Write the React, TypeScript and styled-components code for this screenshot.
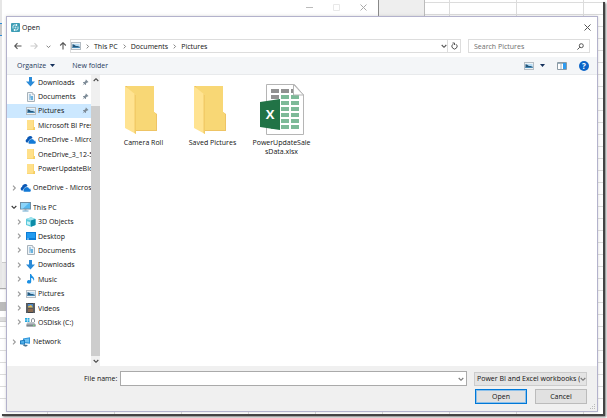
import React from 'react';
import styled, { createGlobalStyle, css } from 'styled-components';

const Global = createGlobalStyle`
  * { box-sizing: border-box; }
  body { margin: 0; background: #fff; font-family: "Open Sans", "Noto Sans", sans-serif; font-size: 7px; line-height: 9px; color: #111; }
  button, input, select { font: inherit; color: inherit; margin: 0; }
  svg { display: block; flex: none; }
`;

const Page = styled.div`
  min-height: 100vh;
  display: flex;
  padding: 0 4px 4px 0;
`;

const Desktop = styled.div`
  position: relative;
  isolation: isolate;
  flex: 1;
  min-width: 0;
  display: flex;
  padding: 16px 5px 2px 6px;
  background:
    repeating-linear-gradient(180deg, transparent 0 11px, #dcdcdc 11px 12px) 0 -9px,
    repeating-linear-gradient(90deg, transparent 0 66px, #dcdcdc 66px 67px) -19px 0,
    #fff;
  box-shadow: 2px 2px 0 0 #444, 3px 3px 2px 0 #777;
`;

const BackWindow = styled.div`
  position: absolute;
  z-index: -1;
  left: 0;
  top: 0;
  width: 425px;
  height: 322px;
  background: linear-gradient(180deg, #eee 0 290px, #fff 290px 302px, #bbb 302px 311px, #fff 311px 317px, #ddd 317px);
  border-right: 1px solid #bbb;
  border-bottom: 1px solid #ccc;
`;

const FrontWindow = styled.div`
  position: absolute;
  left: 0;
  top: 0;
  width: 379px;
  height: 289px;
  display: flex;
  justify-content: flex-end;
  gap: 20px;
  padding: 4px 11px 0 0;
  background:
    linear-gradient(180deg, #e6e6e6 0 23px, #2b8bd8 23px 24px, #c8c8c8 24px 35px, #2b8bd8 35px 36px, #e6e6e6 36px) 0 0 / 2px 100% no-repeat,
    linear-gradient(180deg, #fff 0 262px, #ccc 262px 263px, #ececec 263px);
  border-right: 1px solid #888;
  border-bottom: 1px solid #aaa;
  color: #bbb;
`;

const Dialog = styled.section`
  flex: 1;
  min-width: 0;
  display: flex;
  flex-direction: column;
  background: #fff;
  border: 1px solid #b3b2cc;
  box-shadow: 0 0 3px #9996;
`;

const TitleBar = styled.header`
  height: 20px;
  display: flex;
  align-items: center;
  gap: 2px;
  padding: 0 6px 0 4px;
`;

const Title = styled.h1`
  flex: 1;
  margin: 0;
  font-size: 7px;
  font-weight: 400;
`;

const IconButton = styled.button`
  display: grid;
  place-items: center;
  padding: 0;
  border: 0;
  background: transparent;
`;

const AddressRow = styled.div`
  display: flex;
  align-items: center;
  padding: 2px 7px 4px;
`;

const History = styled.div`
  display: flex;
  align-items: center;
  gap: 8px;
  margin-right: 3px;
`;

const AddressBox = styled.div`
  flex: 1;
  display: flex;
  height: 14px;
  border: 1px solid #ddd;
`;

const Crumbs = styled.nav`
  flex: 1;
  display: flex;
  align-items: center;
  gap: 4px;
`;

const Crumb = styled.a`
  color: inherit;
  text-decoration: none;
`;

const Refresh = styled(IconButton)`
  width: 13px;
  border-left: 1px solid #ddd;
`;

const SearchBox = styled.label`
  display: flex;
  align-items: center;
  width: 122px;
  height: 14px;
  margin-left: 7px;
  padding: 0 5px;
  border: 1px solid #ddd;
`;

const SearchInput = styled.input`
  flex: 1;
  min-width: 0;
  padding: 0;
  border: 0;
  outline: 0;
  background: transparent;
  &::placeholder { color: #6d6d6d; opacity: 1; }
`;

const Toolbar = styled.div`
  display: flex;
  align-items: center;
  height: 18px;
  padding: 0 8px 0 10px;
  background: #f4f6f8;
  border-bottom: 1px solid #e8eaec;
`;

const ToolButton = styled.button`
  display: flex;
  align-items: center;
  gap: 4px;
  margin-right: 17px;
  padding: 0;
  border: 0;
  background: transparent;
  color: #25395c;
`;

const ToolEnd = styled.div`
  display: flex;
  align-items: center;
  gap: 12px;
  margin-left: auto;
`;

const ViewGroup = styled.div`
  display: flex;
  align-items: center;
  gap: 6px;
`;

const Content = styled.div`
  flex: 1;
  display: flex;
`;

const Tree = styled.ul`
  width: 84px;
  display: flex;
  flex-direction: column;
  margin: 0;
  padding: 0 0 17px;
  list-style: none;
`;

const TreeRow = styled.li<{ $depth: number; $selected?: boolean; $gap?: boolean }>`
  flex: 1 0 14px;
  display: flex;
  align-items: center;
  padding-left: ${p => (p.$depth ? 8 : 3)}px;
  margin-top: ${p => (p.$gap ? 5 : 0)}px;
  ${p => p.$selected && css`background: #cce8ff;`}
`;

const Twisty = styled.span`
  width: 7px;
  display: grid;
  place-items: center;
  margin-right: 3px;
`;

const RowIcon = styled.span`
  width: 11px;
  display: grid;
  place-items: center;
  margin-right: 2px;
`;

const RowLabel = styled.span`
  flex: 1;
  min-width: 0;
  overflow: hidden;
  white-space: nowrap;
`;

const PinSlot = styled.span`
  margin-right: 2px;
`;

const ScrollBar = styled.div`
  width: 9px;
  display: flex;
  flex-direction: column;
  background: #f0f0f0;
`;

const ScrollButton = styled(IconButton)`
  height: 10px;
`;

const Thumb = styled.div`
  flex: 1;
  margin-top: 21px;
  background: #cdcdcd;
`;

const Files = styled.div`
  flex: 1;
  display: flex;
  align-items: flex-start;
  padding: 9px 0 0 9px;
`;

const FileTile = styled.button`
  width: 69px;
  display: flex;
  flex-direction: column;
  align-items: center;
  padding: 0 4px;
  border: 0;
  background: transparent;
  text-align: center;
`;

const FileName = styled.span`
  margin-top: 2px;
  max-width: 60px;
  overflow-wrap: anywhere;
`;

const Footer = styled.footer`
  position: relative;
  display: flex;
  flex-direction: column;
  gap: 3px;
  padding: 5px 10px 7px 77px;
  background: #f0f0f0;
`;

const FooterRow = styled.div`
  display: flex;
  justify-content: flex-end;
  align-items: center;
`;

const NameLabel = styled.label`
  margin-right: 3px;
`;

const NameCombo = styled.div`
  flex: 1;
  display: flex;
  height: 15px;
  margin-right: 7px;
  padding-right: 2px;
  border: 1px solid #aaa;
  background: #fff;
`;

const NameInput = styled.input`
  flex: 1;
  min-width: 0;
  padding: 0 2px;
  border: 0;
  outline: 0;
`;

const TypeWrap = styled.div`
  width: 113px;
  height: 14px;
  display: flex;
  align-items: center;
  padding-left: 2px;
  border: 1px solid #ccc;
  background: #e4e4e4;
`;

const TypeSelect = styled.select`
  flex: 1;
  min-width: 0;
  padding: 0;
  border: 0;
  appearance: none;
  background: transparent;
  text-overflow: clip;
`;

const ActionButton = styled.button<{ $primary?: boolean }>`
  width: 52px;
  height: 15px;
  margin-left: 8px;
  padding: 0;
  background: #e1e1e1;
  border: ${p => (p.$primary ? '1px solid #0078d7' : '1px solid #bbb')};
  box-shadow: ${p => (p.$primary ? 'inset 0 0 0 1px #8cc0ea' : 'none')};
`;

const Grip = styled.svg`
  position: absolute;
  right: 1px;
  bottom: 1px;
`;

type Dir = 'left' | 'right' | 'up' | 'down';
const turns: Record<Dir, number> = { right: 0, down: 90, left: 180, up: 270 };

const Chevron = ({ dir, color = '#777', size = 6 }: { dir: Dir; color?: string; size?: number }) => (
  <svg width={size} height={size} viewBox="0 0 6 6" fill="none" stroke={color} strokeWidth="1.1">
    <path d="M2 .7 4.3 3 2 5.3" transform={`rotate(${turns[dir]} 3 3)`} />
  </svg>
);

const Arrow = ({ dir, color = '#555' }: { dir: Dir; color?: string }) => (
  <svg width="8" height="8" viewBox="0 0 8 8" fill="none" stroke={color} strokeWidth="1.1">
    <path d="M.5 4H7.3M4.5 1.2 7.3 4 4.5 6.8" transform={`rotate(${turns[dir]} 4 4)`} />
  </svg>
);

const Cross = ({ color = '#555' }: { color?: string }) => (
  <svg width="7" height="7" viewBox="0 0 7 7" stroke={color} strokeWidth="1"><path d="m.5.5 6 6m0-6-6 6" /></svg>
);

const Caret = () => <svg width="5" height="3" viewBox="0 0 5 3"><path d="M0 0h5L2.500 3z" fill="#14305c" /></svg>;

const AppIcon = () => (
  <svg width="9" height="9" viewBox="0 0 9 9">
    <rect width="9" height="9" rx="1" fill="#3d9db5" />
    <path d="M2 5.500V3a1.500 1.500 0 0 1 2-1h1.500M7 3.500V6a1.500 1.500 0 0 1-2 1H3.500" fill="none" stroke="#d8f0f5" />
    <path d="m5 .8 1.700 1.200L5 3.300M4 5.700 2.300 7 4 8.200" fill="#fff" />
    <circle cx="4.500" cy="4.500" r="1" fill="#c1e4ec" />
  </svg>
);

const PictureIcon = () => (
  <svg width="10" height="8" viewBox="0 0 10 8">
    <rect x=".5" y=".5" width="9" height="7" fill="#eef2f5" stroke="#b4bcc3" />
    <path d="M1.500 2h7v4h-7z" fill="#b7dcf4" />
    <path d="M1.500 2.300c2 0 2.500 1.700 4 1.700s2 .5 3 .6V6h-7z" fill="#26567a" />
    <path d="M1.500 5h7v1h-7z" fill="#4388b5" />
  </svg>
);

const DownloadIcon = () => (
  <svg width="9" height="10" viewBox="0 0 9 10"><path d="M3 0h3v4.500h3L4.500 9.500 0 4.500h3z" fill="#2b8bd8" /></svg>
);

const DocumentIcon = () => (
  <svg width="8" height="10" viewBox="0 0 8 10">
    <path d="M.5.5h5l2 2v7h-7z" fill="#eef3f7" stroke="#a7b2ba" />
    <path d="M5.500.5v2h2" fill="#fff" stroke="#a7b2ba" strokeWidth=".7" />
    <path d="M2 3h2M2 5h4M2 7h1" stroke="#6aa3cc" />
    <path d="M3.500 4h2.500v4H3.500z" fill="#69b2de" />
  </svg>
);

const FolderIcon = () => (
  <svg width="8" height="10" viewBox="0 0 8 10">
    <path d="M0 0h7v7h1v3H0z" fill="#f5ce62" /><path d="M0 0h6.500v7L6 9.500H0z" fill="#ffe08a" />
  </svg>
);

const CloudIcon = () => (
  <svg width="11" height="8" viewBox="0 0 11 8">
    <path d="M1.500 6.500A2 2 0 0 1 2 3a3 3 0 0 1 5.500-1.500L4 6.500z" fill="#0a58b5" />
    <path d="M4.500 8A2 2 0 0 1 4.500 4.300a2.500 2.500 0 0 1 4.700.3A1.700 1.700 0 0 1 9.500 8z" fill="#1279d6" stroke="#fff" strokeWidth=".5" />
  </svg>
);

const ComputerIcon = () => (
  <svg width="11" height="10" viewBox="0 0 11 10">
    <rect x=".5" y=".5" width="10" height="6.500" fill="#55b8f0" stroke="#6f8ea3" />
    <path d="M1 1h8L3 6.500H1z" fill="#8bd4fa" /><path d="M4.500 7h2v1.500h-2z" fill="#9aa8b2" /><path d="M2.500 9h6" stroke="#65a6cf" />
  </svg>
);

const CubeIcon = () => (
  <svg width="10" height="10" viewBox="0 0 10 10">
    <path d="M0 2 5 .3 9.500 2v6L5 9.700 0 8z" fill="#5cc9dc" />
    <path d="M0 2 5 .3 9.500 2 5 3.500z" fill="#9de3ee" /><path d="M5 3.500 9.500 2v6L5 9.700z" fill="#0d8ca8" /><path d="M1 4.200 4 5v3L1 7.200z" fill="#c9f3f7" />
  </svg>
);

const DesktopIcon = () => (
  <svg width="10" height="8" viewBox="0 0 10 8">
    <rect width="10" height="8" fill="#0c7cd5" /><path d="M1 1h8v5H1z" fill="#229bf0" /><path d="M1 7h2" stroke="#b5ddfa" />
  </svg>
);

const MusicIcon = () => (
  <svg width="8" height="10" viewBox="0 0 8 10">
    <path d="M3 0h1.200c.2 2.300 3.300 2.500 3 6l-.8.700C6.700 4.700 5 4 4.200 4v4A2.100 1.700 0 1 1 3 6.300z" fill="#1a8fe3" />
  </svg>
);

const VideoIcon = () => (
  <svg width="9" height="10" viewBox="0 0 9 10">
    <rect width="9" height="10" fill="#3f4348" /><path d="M2 1h5v3.500H2z" fill="#4b86c6" /><path d="M2 5.500h5V9H2z" fill="#8a6a4f" />
    <path d="M2 3.500 5 2l2 2.500H2z" fill="#e6b94e" /><path d="M1 .5v9M8 .5v9" stroke="#c8ccd0" strokeWidth=".8" strokeDasharray="1 1" />
  </svg>
);

const DiskIcon = () => (
  <svg width="11" height="9" viewBox="0 0 11 9">
    <path d="M0 0h2v1.700H0zM2.500 0h2v1.700h-2zM0 2.200h2v1.700H0zM2.500 2.200h2v1.700h-2z" fill="#25a9e0" />
    <path d="m2 4.500 7-.5 1.500 2.500v2h-9v-2z" fill="#b3babf" /><path d="M1.500 6.500h9v2h-9z" fill="#7d868d" /><path d="M8 7.500h1.500" stroke="#73de79" />
    <path d="M6.500 4V2a1.500 1.500 0 0 1 3 0v2" fill="none" stroke="#8d959b" />
  </svg>
);

const NetworkIcon = () => (
  <svg width="11" height="10" viewBox="0 0 11 10">
    <path d="m3 1.500 7-1.200v6.500L3 6z" fill="#2d93d8" /><path d="m4 2.300 5-.9v4.100L4 5z" fill="#6fc2f3" />
    <path d="m0 3.500 5-.7v5L0 7.300z" fill="#1674b8" /><path d="m.8 4.200 3.400-.4v3L.8 6.500z" fill="#4faee8" /><path d="m4 7.500 4 .6-2 1.600-3-.9z" fill="#4d7590" />
  </svg>
);

const PinIcon = () => (
  <svg width="7" height="7" viewBox="0 0 7 7"><path d="m4 .5 2.500 2.500-.7.500-.6-.1L4 4.600v1.200l-.7.200L2.500 5 .5 6.500 2 4.500 1 3.700l.2-.7h1.200L3.700 1.700l-.2-.6z" fill="#7e8c98" /></svg>
);

const BigFolder = () => (
  <svg width="40" height="52" viewBox="0 0 40 52">
    <path d="M1 2h29v26l3 2v17H11z" fill="#eec465" />
    <path d="M3 2h27v26l2 2v16H11z" fill="#f8d775" />
    <path d="M1 2 12 11v39L1 44z" fill="#ffe391" />
    <path d="m10.500 10 1.500 1v39l-1.500-1z" fill="#f2cb67" />
  </svg>
);

const cells = [0, 1, 2, 3, 4, 5, 6];
const ExcelFile = () => (
  <svg width="46" height="52" viewBox="0 0 46 52">
    <path d="M7.500.5h28l9 10.500v39.500h-37z" fill="#fff" stroke="#b5b5b5" />
    {cells.map(row => [0, 1, 2].map(col => (
      <rect key={`${row}-${col}`} x={12 + col * 10} y={5 + row * 6} width="8" height="4" fill={row === 0 || (row === 1 && col === 0) ? '#919191' : '#7dba98'} />
    )))}
    <path d="M34.500.5V11h10z" fill="#fff" stroke="#b5b5b5" />
    <path d="m1 18 20-3v31L1 43z" fill="#217346" />
    <text x="11" y="35" textAnchor="middle" fontSize="13" fontWeight="700" fill="#fff">X</text>
  </svg>
);

type Node = { label: string; icon: () => React.ReactElement; depth: number; open?: boolean; leaf?: boolean; pinned?: boolean; selected?: boolean; gap?: boolean };
const nodes: Node[] = [
  { label: 'Downloads', icon: DownloadIcon, depth: 1, leaf: true, pinned: true },
  { label: 'Documents', icon: DocumentIcon, depth: 1, leaf: true, pinned: true },
  { label: 'Pictures', icon: PictureIcon, depth: 1, leaf: true, pinned: true, selected: true },
  { label: 'Microsoft BI Pres', icon: FolderIcon, depth: 1, leaf: true },
  { label: 'OneDrive - Micro', icon: CloudIcon, depth: 1, leaf: true },
  { label: 'OneDrive_3_12-5', icon: FolderIcon, depth: 1, leaf: true },
  { label: 'PowerUpdateBlo', icon: FolderIcon, depth: 1, leaf: true },
  { label: 'OneDrive - Micros', icon: CloudIcon, depth: 0, gap: true },
  { label: 'This PC', icon: ComputerIcon, depth: 0, open: true, gap: true },
  { label: '3D Objects', icon: CubeIcon, depth: 1 },
  { label: 'Desktop', icon: DesktopIcon, depth: 1 },
  { label: 'Documents', icon: DocumentIcon, depth: 1 },
  { label: 'Downloads', icon: DownloadIcon, depth: 1 },
  { label: 'Music', icon: MusicIcon, depth: 1 },
  { label: 'Pictures', icon: PictureIcon, depth: 1 },
  { label: 'Videos', icon: VideoIcon, depth: 1 },
  { label: 'OSDisk (C:)', icon: DiskIcon, depth: 1 },
  { label: 'Network', icon: NetworkIcon, depth: 0, gap: true },
];

export default function App() {
  return (
    <Page>
      <Global />
      <Desktop>
        <BackWindow>
          <FrontWindow>
            <svg width="7" height="7" viewBox="0 0 7 7" stroke="currentColor"><path d="M0 3.500h7" /></svg>
            <svg width="7" height="7" viewBox="0 0 7 7" stroke="#e8e8e8" fill="none"><path d="M.5.5h6v6h-6z" /></svg>
            <Cross color="#aaa" />
          </FrontWindow>
        </BackWindow>
        <Dialog aria-label="Open">
          <TitleBar>
            <AppIcon />
            <Title>Open</Title>
            <IconButton aria-label="Close"><Cross /></IconButton>
          </TitleBar>
          <AddressRow>
            <History>
              <IconButton aria-label="Back"><Arrow dir="left" /></IconButton>
              <IconButton aria-label="Forward"><Arrow dir="right" color="#ccc" /></IconButton>
              <IconButton aria-label="Recent locations"><Chevron dir="down" size={5} /></IconButton>
              <IconButton aria-label="Up"><Arrow dir="up" /></IconButton>
            </History>
            <AddressBox>
              <Crumbs aria-label="Location">
                <PictureIcon />
                <Chevron dir="right" size={5} /><Crumb href="#pc">This PC</Crumb>
                <Chevron dir="right" size={5} /><Crumb href="#documents">Documents</Crumb>
                <Chevron dir="right" size={5} /><Crumb href="#pictures">Pictures</Crumb>
              </Crumbs>
              <IconButton aria-label="Previous locations"><Chevron dir="down" color="#555" /></IconButton>
              <Refresh aria-label="Refresh">
                <svg width="7" height="8" viewBox="0 0 7 8" fill="none" stroke="#555"><path d="M5 2.200A2.600 2.600 0 1 1 2 2.200M1.500 1h2v2" /></svg>
              </Refresh>
            </AddressBox>
            <SearchBox>
              <SearchInput type="search" placeholder="Search Pictures" aria-label="Search Pictures" />
              <svg width="7" height="7" viewBox="0 0 7 7" fill="none" stroke="#555"><circle cx="4.300" cy="2.700" r="2" /><path d="M2.800 4.200.4 6.600" /></svg>
            </SearchBox>
          </AddressRow>
          <Toolbar>
            <ToolButton>Organize <Caret /></ToolButton>
            <ToolButton>New folder</ToolButton>
            <ToolEnd>
              <ViewGroup>
                <IconButton aria-label="View"><PictureIcon /></IconButton>
                <IconButton aria-label="More views"><Caret /></IconButton>
              </ViewGroup>
              <IconButton aria-label="Preview pane">
                <svg width="10" height="8" viewBox="0 0 10 8"><path d="M.5.5h9v7h-9z" fill="#fff" stroke="#8b9aa5" /><path d="M1 1.500h8M4 2v5" stroke="#9bb0bd" /><path d="M6 1h3v6H6z" fill="#2d9bf0" /></svg>
              </IconButton>
              <IconButton aria-label="Help">
                <svg width="10" height="10" viewBox="0 0 10 10"><circle cx="5" cy="5" r="5" fill="#0b64c8" /><text x="5" y="8" textAnchor="middle" fontSize="8" fontWeight="700" fill="#fff">?</text></svg>
              </IconButton>
            </ToolEnd>
          </Toolbar>
          <Content>
            <Tree>
              {nodes.map((n, i) => (
                <TreeRow key={i} $depth={n.depth} $selected={n.selected} $gap={n.gap}>
                  <Twisty>{!n.leaf && <Chevron dir={n.open ? 'down' : 'right'} color={n.open ? '#333' : '#999'} />}</Twisty>
                  <RowIcon><n.icon /></RowIcon>
                  <RowLabel>{n.label}</RowLabel>
                  {n.pinned && <PinSlot><PinIcon /></PinSlot>}
                </TreeRow>
              ))}
            </Tree>
            <ScrollBar>
              <ScrollButton aria-label="Scroll up"><Chevron dir="up" color="#444" /></ScrollButton>
              <Thumb />
              <ScrollButton aria-label="Scroll down"><Chevron dir="down" color="#444" /></ScrollButton>
            </ScrollBar>
            <Files>
              <FileTile><BigFolder /><FileName>Camera Roll</FileName></FileTile>
              <FileTile><BigFolder /><FileName>Saved Pictures</FileName></FileTile>
              <FileTile><ExcelFile /><FileName>PowerUpdateSalesData.xlsx</FileName></FileTile>
            </Files>
          </Content>
          <Footer>
            <FooterRow>
              <NameLabel htmlFor="file-name">File name:</NameLabel>
              <NameCombo>
                <NameInput id="file-name" />
                <IconButton aria-label="Recent file names"><Chevron dir="down" /></IconButton>
              </NameCombo>
              <TypeWrap>
                <TypeSelect aria-label="File type"><option>Power BI and Excel workbooks (</option></TypeSelect>
                <Chevron dir="down" />
              </TypeWrap>
            </FooterRow>
            <FooterRow>
              <ActionButton $primary>Open</ActionButton>
              <ActionButton>Cancel</ActionButton>
            </FooterRow>
            <Grip width="6" height="6" viewBox="0 0 6 6" fill="#bbb"><path d="M4 0h1v1H4zM4 2h1v1H4zM4 4h1v1H4zM2 2h1v1H2zM2 4h1v1H2zM0 4h1v1H0z" /></Grip>
          </Footer>
        </Dialog>
      </Desktop>
    </Page>
  );
}
